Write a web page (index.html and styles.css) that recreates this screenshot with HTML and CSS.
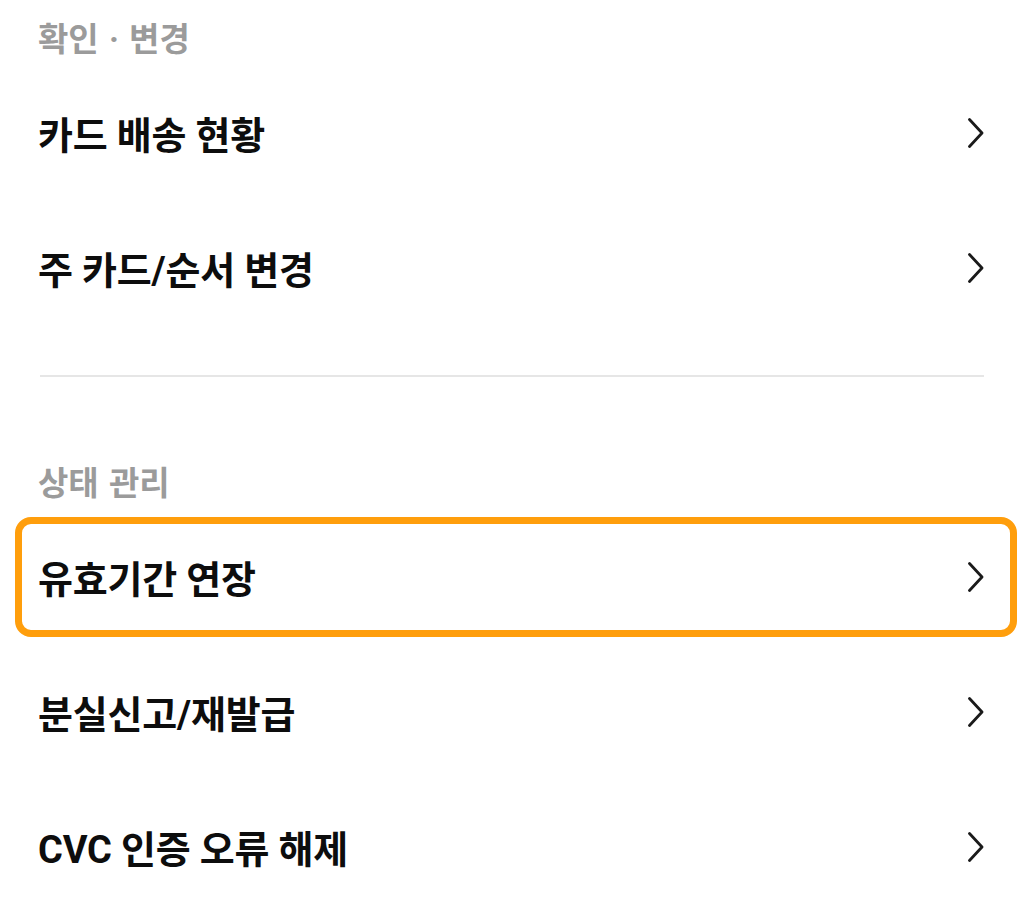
FILE: index.html
```html
<!DOCTYPE html>
<html lang="ko">
<head>
<meta charset="utf-8">
<link rel="stylesheet" href="styles.css">
</head>
<body>
<div class="page">
  <section class="group">
    <h2 class="group-title">확인 · 변경</h2>
    <div class="row"><span class="row-label">카드 배송 현황</span><svg class="chev" viewBox="0 0 16 30" width="16" height="30"><polyline points="1.5,1.5 14,15 1.5,28.5"/></svg></div>
    <div class="row"><span class="row-label">주 카드/순서 변경</span><svg class="chev" viewBox="0 0 16 30" width="16" height="30"><polyline points="1.5,1.5 14,15 1.5,28.5"/></svg></div>
  </section>
  <hr class="divider">
  <section class="group">
    <h2 class="group-title">상태 관리</h2>
    <div class="row row-focus"><span class="row-label">유효기간 연장</span><svg class="chev" viewBox="0 0 16 30" width="16" height="30"><polyline points="1.5,1.5 14,15 1.5,28.5"/></svg></div>
    <div class="row"><span class="row-label">분실신고/재발급</span><svg class="chev" viewBox="0 0 16 30" width="16" height="30"><polyline points="1.5,1.5 14,15 1.5,28.5"/></svg></div>
    <div class="row"><span class="row-label">CVC 인증 오류 해제</span><svg class="chev" viewBox="0 0 16 30" width="16" height="30"><polyline points="1.5,1.5 14,15 1.5,28.5"/></svg></div>
  </section>
</div>
</body>
</html>
```

FILE: styles.css
```css
html, body {
  margin: 0;
  padding: 0;
  background: #ffffff;
}
.page {
  font-family: Roboto, "Noto Sans CJK KR", sans-serif;
  width: 1024px;
}
.group-title {
  margin: 0;
  padding: 20px 38px 5px;
  font-size: 33px;
  line-height: 40px;
  font-weight: 700;
  color: #9b9b9b;
  word-spacing: 2px;
}
.row {
  position: relative;
  height: 135px;
  padding: 0 40px 0 38px;
  display: flex;
  align-items: center;
  justify-content: space-between;
}
.row-label {
  font-size: 38px;
  font-weight: 700;
  color: #0d0d0d;
  letter-spacing: -0.2px;
}
.chev {
  display: block;
  fill: none;
  stroke: #1a1a1a;
  stroke-width: 2.8;
  stroke-linecap: round;
  stroke-linejoin: round;
}
.divider {
  margin: 40px 40px 67px;
  border: 0;
  height: 2px;
  background: #e6e6e6;
}
.row-focus::after {
  content: "";
  position: absolute;
  left: 15px;
  right: 7px;
  top: 8px;
  bottom: 7px;
  border: 7px solid #ff9e0c;
  border-radius: 16px;
  pointer-events: none;
}
```
